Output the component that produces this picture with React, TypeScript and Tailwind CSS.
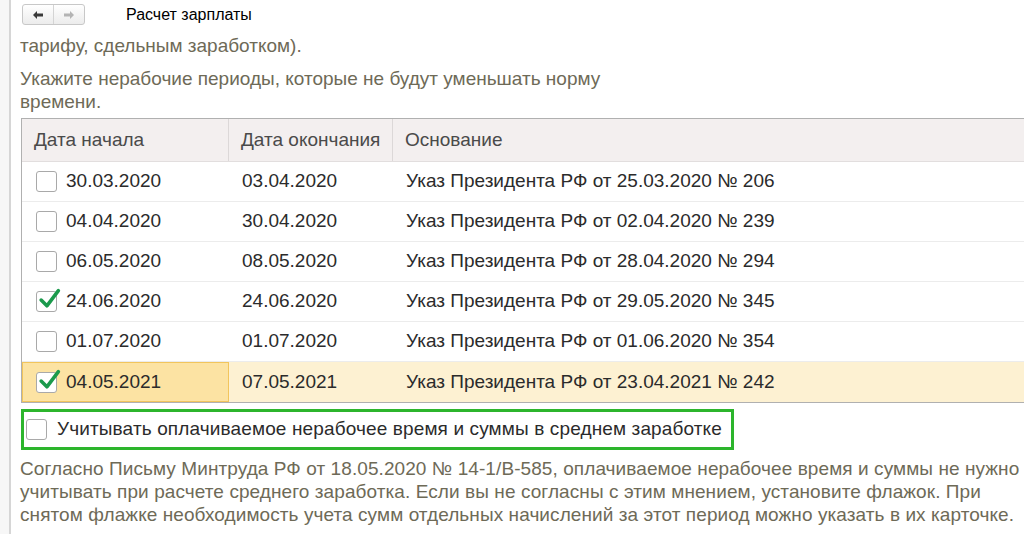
import React from 'react';

const font = { fontFamily: '"Liberation Sans", Arial, sans-serif' };

interface IRow {
  start: string;
  end: string;
  reason: string;
  checked: boolean;
}

const rows: IRow[] = [
  { start: '30.03.2020', end: '03.04.2020', reason: 'Указ Президента РФ от 25.03.2020 № 206', checked: false },
  { start: '04.04.2020', end: '30.04.2020', reason: 'Указ Президента РФ от 02.04.2020 № 239', checked: false },
  { start: '06.05.2020', end: '08.05.2020', reason: 'Указ Президента РФ от 28.04.2020 № 294', checked: false },
  { start: '24.06.2020', end: '24.06.2020', reason: 'Указ Президента РФ от 29.05.2020 № 345', checked: true },
  { start: '01.07.2020', end: '01.07.2020', reason: 'Указ Президента РФ от 01.06.2020 № 354', checked: false },
  { start: '04.05.2021', end: '07.05.2021', reason: 'Указ Президента РФ от 23.04.2021 № 242', checked: true },
];

const Checkbox = ({ checked }: { checked: boolean }) => (
  <div className="relative w-[21px] h-[21px] shrink-0 rounded-[3px] border border-[#a9a9a9] bg-white">
    {checked && (
      <svg className="absolute left-[1px] top-[-5px]" width="23" height="23" viewBox="0 0 22 22">
        <path d="M3 12.5 L8.5 18 L19.5 3.5" fill="none" stroke="#1b9a4c" strokeWidth="3.4" strokeLinecap="round" strokeLinejoin="round" />
      </svg>
    )}
  </div>
);

const Arrow = ({ dir, color }: { dir: 'left' | 'right'; color: string }) => (
  <svg width="12" height="10" viewBox="0 0 12 10">
    {dir === 'left' ? (
      <path d="M1 5 L5 1 L5 3.6 L11 3.6 L11 6.4 L5 6.4 L5 9 Z" fill={color} />
    ) : (
      <path d="M11 5 L7 1 L7 3.6 L1 3.6 L1 6.4 L7 6.4 L7 9 Z" fill={color} />
    )}
  </svg>
);

export default function App() {
  return (
    <div className="flex w-[1024px] h-[534px] overflow-hidden bg-white" style={font}>
      <div className="w-[11px] shrink-0 border-r-2 border-[#d6d6d6] bg-[#f7f7f7]" />
      <div className="flex-1 flex flex-col pl-[9px] min-w-0">
        <div className="flex items-center h-[27px] pt-[2px]">
          <div className="flex h-[21px] w-[63px] ml-[2px] rounded-[3px] border border-[#c8c8c8] bg-gradient-to-b from-white to-[#ececec]">
            <div className="flex-1 flex items-center justify-center border-r border-[#d4d4d4]">
              <Arrow dir="left" color="#3a3a3a" />
            </div>
            <div className="flex-1 flex items-center justify-center">
              <Arrow dir="right" color="#b4b4b4" />
            </div>
          </div>
          <div className="ml-[41px] text-[16px] text-black">Расчет зарплаты</div>
        </div>
        <div className="text-[19px] leading-[23px] text-[#6e6a57] whitespace-nowrap">
          <div className="mt-[7px]">тарифу, сдельным заработком).</div>
          <div className="mt-[10px]">Укажите нерабочие периоды, которые не будут уменьшать норму</div>
          <div>времени.</div>
        </div>
        <div className="mt-[5px] ml-[1px] border-t border-l border-b border-[#b0b0b0] text-[19px]">
          <div className="flex h-[43px] bg-[#f3efef] text-[#4a4a4a] border-b border-[#e2dede]">
            <div className="w-[207px] flex items-center pl-[12px] border-r border-[#dcd8d8]">Дата начала</div>
            <div className="w-[164px] flex items-center pl-[12px] border-r border-[#dcd8d8]">Дата окончания</div>
            <div className="flex-1 flex items-center pl-[12px]">Основание</div>
          </div>
          {rows.map((row, index) => {
            const last = index === rows.length - 1;
            return (
              <div
                key={index}
                className={
                  last
                    ? 'flex h-[40px] bg-[#fdf1d2] text-[#2b2b2b]'
                    : 'flex h-[40px] text-[#2b2b2b] border-b border-[#ececec]'
                }
              >
                <div
                  className={
                    last
                      ? 'w-[207px] flex items-center gap-[9px] pl-[13px] bg-[#fce3a3] border border-[#f2c55c]'
                      : 'w-[207px] flex items-center gap-[9px] pl-[14px]'
                  }
                >
                  <Checkbox checked={row.checked} />
                  <span>{row.start}</span>
                </div>
                <div className="w-[164px] flex items-center pl-[13px]">{row.end}</div>
                <div className="flex-1 flex items-center pl-[13px]">{row.reason}</div>
              </div>
            );
          })}
        </div>
        <div className="mt-[6px] ml-[1px] w-[713px] h-[41px] flex items-center gap-[10px] pl-[2px] border-[3px] border-[#2cb52c] text-[19px] tracking-[0.13px] text-[#2b2b2b] whitespace-nowrap">
          <Checkbox checked={false} />
          <span>Учитывать оплачиваемое нерабочее время и суммы в среднем заработке</span>
        </div>
        <div className="mt-[7px] text-[19px] leading-[23px] tracking-[0.08px] text-[#6e6a57] whitespace-nowrap">
          <div>Согласно Письму Минтруда РФ от 18.05.2020 № 14-1/В-585, оплачиваемое нерабочее время и суммы не нужно</div>
          <div>учитывать при расчете среднего заработка. Если вы не согласны с этим мнением, установите флажок. При</div>
          <div>снятом флажке необходимость учета сумм отдельных начислений за этот период можно указать в их карточке.</div>
        </div>
      </div>
    </div>
  );
}
